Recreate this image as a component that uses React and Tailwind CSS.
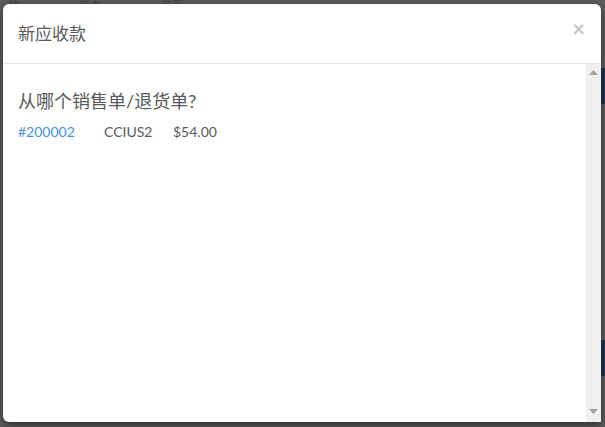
import React from "react";

export default function App() {
  const font = { fontFamily: "Lato, 'Noto Sans CJK SC', sans-serif" };
  return (
    <div className="relative w-[605px] h-[427px] overflow-hidden bg-[#5c5c5c]" style={font}>
      {/* dimmed background page */}
      <div className="absolute inset-0 flex flex-col">
        <div className="h-[8px] flex items-start gap-[60px] pl-[8px] text-[11px] leading-[8px] text-[#444]">
          <span>仓</span><span>库土</span><span>状态</span>
        </div>
        <div className="flex-1 flex flex-col items-end">
          <div className="h-[60px]" />
          <div className="h-[36px] w-[10px] bg-[#1f3450]" />
          <div className="h-[236px]" />
          <div className="h-[36px] w-[10px] bg-[#1f3450]" />
        </div>
      </div>

      {/* modal */}
      <div className="absolute left-[3px] top-[4px] w-[598px] h-[418px] bg-white rounded-tl-[6px] rounded-tr-[6px] rounded-bl-[6px] flex flex-col overflow-hidden shadow-[0_3px_9px_rgba(0,0,0,0.5)]">
        <div className="h-[60px] shrink-0 flex items-center justify-between pl-[15px] pr-[16px] border-b border-[#e5e5e5]">
          <span className="text-[17px] text-[#5a5a5a] leading-none">新应收款</span>
          <span className="text-[22px] font-bold text-[#c8c8c8] leading-none -mt-[10px]">×</span>
        </div>
        <div className="flex-1 flex min-h-0">
          <div className="flex-1 pl-[15px] pt-[26px]">
            <div className="text-[18px] text-[#5a5a5a] leading-[22px]">从哪个销售单/退货单?</div>
            <div className="flex items-center text-[14px] leading-[18px] mt-[11px] text-[#5a5a5a]">
              <span className="text-[#4a90d9] w-[86px]">#200002</span>
              <span className="w-[69px]">CCIUS2</span>
              <span>$54.00</span>
            </div>
          </div>
          <div className="w-[15px] bg-[#f0f0f0] flex flex-col items-center justify-between py-[5px]">
            <svg width="9" height="6" viewBox="0 0 9 6" className="mt-[1px]"><path d="M0 5 L4.5 0 L9 5 Z" fill="#a3a3a3" /></svg>
            <svg width="9" height="6" viewBox="0 0 9 6" className="mb-[2px]"><path d="M0 0 L9 0 L4.5 5 Z" fill="#a3a3a3" /></svg>
          </div>
        </div>
      </div>
    </div>
  );
}
